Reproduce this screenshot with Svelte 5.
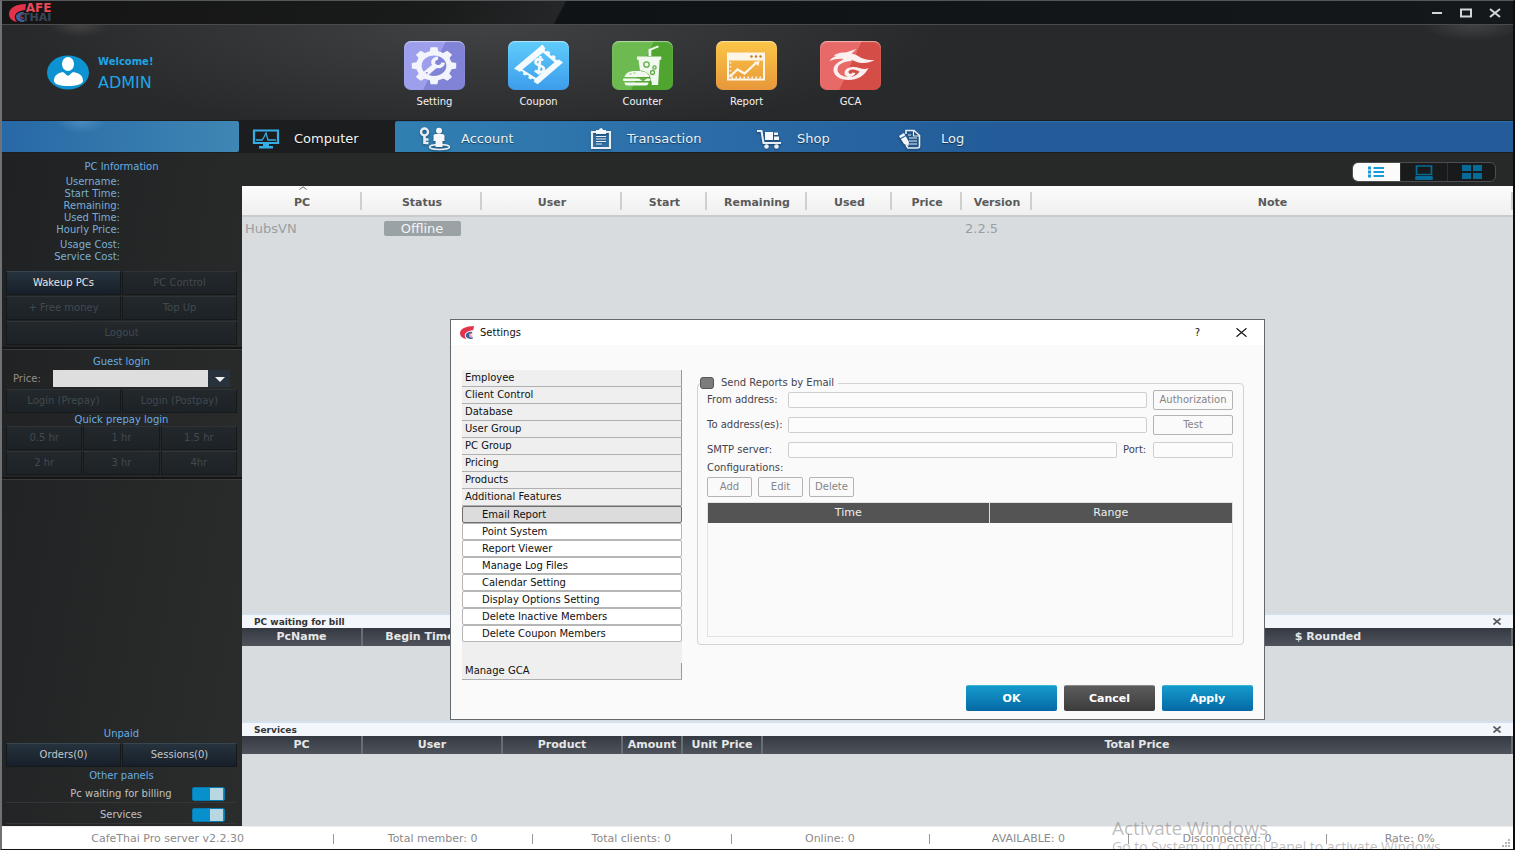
<script lang="ts">
  type App = { id: string; label: string }
  type Tab = { id: string; label: string; width: number; iconWidth: number }
  type Column = { label: string; width?: number }

  const apps: App[] = [
    { id: 'setting', label: 'Setting' },
    { id: 'coupon', label: 'Coupon' },
    { id: 'counter', label: 'Counter' },
    { id: 'report', label: 'Report' },
    { id: 'gca', label: 'GCA' },
  ]

  const tabs: Tab[] = [
    { id: 'account', label: 'Account', width: 166, iconWidth: 32 },
    { id: 'transaction', label: 'Transaction', width: 166, iconWidth: 32 },
    { id: 'shop', label: 'Shop', width: 138, iconWidth: 36 },
    { id: 'log', label: 'Log', width: 120, iconWidth: 42 },
  ]

  const infoTime = ['Username:', 'Start Time:', 'Remaining:', 'Used Time:', 'Hourly Price:']
  const infoCost = ['Usage Cost:', 'Service Cost:']
  const hours = ['0.5 hr', '1 hr', '1.5 hr', '2 hr', '3 hr', '4hr']

  const pcColumns: Column[] = [
    { label: 'PC', width: 120 },
    { label: 'Status', width: 120 },
    { label: 'User', width: 140 },
    { label: 'Start', width: 85 },
    { label: 'Remaining', width: 100 },
    { label: 'Used', width: 85 },
    { label: 'Price', width: 70 },
    { label: 'Version', width: 70 },
    { label: 'Note' },
  ]

  const billColumns: Column[] = [
    { label: 'PcName', width: 120 },
    { label: 'Begin Time', width: 116 },
    { label: '' },
    { label: '$ Rounded', width: 368 },
  ]

  const serviceColumns: Column[] = [
    { label: 'PC', width: 120 },
    { label: 'User', width: 140 },
    { label: 'Product', width: 120 },
    { label: 'Amount', width: 60 },
    { label: 'Unit Price', width: 80 },
    { label: 'Total Price' },
  ]

  const groups = [
    'Employee',
    'Client Control',
    'Database',
    'User Group',
    'PC Group',
    'Pricing',
    'Products',
    'Additional Features',
  ]

  const features = [
    'Email Report',
    'Point System',
    'Report Viewer',
    'Manage Log Files',
    'Calendar Setting',
    'Display Options Setting',
    'Delete Inactive Members',
    'Delete Coupon Members',
  ]

  const status = [
    'CafeThai Pro server v2.2.30',
    'Total member: 0',
    'Total clients: 0',
    'Online: 0',
    'AVAILABLE: 0',
    'Disconnected: 0',
    'Rate: 0%',
  ]

  let view = $state('list')
  let feature = $state('Email Report')
  let showBilling = $state(true)
  let showServices = $state(true)
  let settingsOpen = $state(true)
</script>

{#snippet columns(cols: Column[])}
  <colgroup>
    {#each cols as col}
      <col style={col.width ? `width: ${col.width}px` : undefined} />
    {/each}
  </colgroup>
{/snippet}

{#snippet swoosh()}
  <path d="M17 0C7 0 0 4 0 10c0 4 3 7 8 8-3-3-3-8 1-10 2-1 5-2 7-2z" fill="#e2334a" />
  <path d="M15 8c-5 0-8 2-8 5 0 3 3 5 8 5l1-2c-3 0-5-1-5-3s1-3 3-3z" fill="#3f5f9c" />
  <path d="M15 10c-2 0-3 1-3 2v2h3" fill="none" stroke="#d33a4c" />
{/snippet}

{#snippet appIcon(id: string)}
  <svg viewBox="0 0 60 49" width="61" height="49" aria-hidden="true">
    {#if id === 'setting'}
      <g transform="translate(29.5 24.8) scale(1.2 1)">
        <circle r="12.6" fill="none" stroke="#f4f5fc" stroke-width="4.6" />
        {#each [0, 45, 90, 135, 180, 225, 270, 315] as angle}
          <path d="M-3.8-13.5l1-5h5.6l1 5z" fill="#f4f5fc" transform="rotate({angle})" />
        {/each}
        <path d="M-8 9L2-1" stroke="#f4f5fc" stroke-width="5" />
        <path d="M7.6-3.2A4.2 4.2 0 1 1 3.4-7.6" fill="none" stroke="#f4f5fc" stroke-width="3.2" />
        <circle cx="-6" cy="7" r=".9" fill="#8d90df" />
      </g>
    {:else if id === 'coupon'}
      <path
        d="M34 3.500L5.500 27.500l5.500 3.300 2-.8 2 1.200-.8 2 2.300 1.300 2-.8 2 1.300-.8 2 2.300 1.400 2-.8 2 1.200-.8 2 4 2.400L54.500 21.500l-4-3-2 .8-2-1.500.8-2-2.300-1.700-2 .8-2-1.500.8-2-2.300-1.700-2 .8-1.500-1.200.8-2zM34.500 11.500L46 21.200 27.500 37 14 28.600z"
        fill="#f4fafe"
        fill-rule="evenodd"
      />
      <path d="M34.500 19.500c-2-2.500-7.500-1.800-7.500 1.700 0 4 8.500 2.500 8.500 6.800 0 3.600-6 4.500-9 1.500M32 15l-2 18.500" fill="none" stroke="#f4fafe" stroke-width="2.600" />
    {:else if id === 'counter'}
      <g fill="#f2f8ef">
        <path d="M24.500 15.500h24.300v3.200h-1.600L45.600 44H39c1-2 0-4-1-5 1-5-4-9-10.500-9.500L26 18.700h-1.500z" />
        <path d="M36 15V8.200l9.500-3.700.8 1.800-7.500 3V15z" />
        <path d="M12 36c1-4 5-6 10-6h4c6 0 10 2 11 6z" />
        <rect x="10.500" y="37.500" width="27" height="2.500" rx="1" />
        <path d="M12 41.500h24c0 2-1 3-3 3H15c-2 0-3-1-3-3z" />
      </g>
      <g fill="none" stroke="#5fae45" stroke-width="1.300">
        <circle cx="34" cy="23.500" r="2.700" /><circle cx="42" cy="26.500" r="1.600" /><circle cx="40" cy="31.500" r="2" />
      </g>
      <path d="M27 37.500h7l-3.500 2.500zM17 33h2M21 32h2" fill="#5fae45" stroke="#5fae45" stroke-width=".7" />
    {:else if id === 'report'}
      <g fill="none" stroke="#fdf6e8">
        <rect x="11.500" y="12.500" width="36" height="26" stroke-width="2" />
        <path d="M12 18.800h35" stroke-width="1.500" />
        <path d="M13 36l8-7.500 7 4 12-11" stroke-width="2.300" />
        <path d="M15 36.500h31" stroke-width="2" stroke-dasharray="1.500 2.500" />
        <path d="M14 21v13" stroke-width="1.500" stroke-dasharray="1.500 2.500" />
      </g>
      <path d="M37 21l6-1-1 5z" fill="#fdf6e8" />
      <path d="M12 13h35v5H12z" fill="#fdf6e8" />
      <g fill="#c27a23"><circle cx="35" cy="15.500" r="1.200" /><circle cx="39.500" cy="15.500" r="1.200" /><circle cx="44" cy="15.500" r="1.200" /></g>
    {:else}
      <path
        d="M9 20c2-3 4-4 7-5l-3-.5c4-2.500 8-3 12-3l11-3.500-5 4.500c5 1 7 3 10 4.500 4 1.700 8 2 13 2-4 2-8 3.500-13 3-6-.5-8-3.500-13-3.500-4 0-5 1.500-8 2l3-2.500c-5-.5-9 .3-14 2z"
        fill="#fbf0ef"
      />
      <path
        d="M30 17.500c-9 .5-17 5-17 11.500 0 6 7 10 15 10 9 0 16-4 20-12-3 1.500-6 1-9 0-7-2.500-15-.5-15 5 0 5 9 5.500 11 0l-3-.5c-1 2-4 1.500-4-.5 0-3 5-3.500 11-.5-2 3.500-6 5.500-10 5.500-7 0-12-3-12-7.500C17 23 23 20.500 31 20z"
        fill="#fbf0ef"
      />
    {/if}
  </svg>
{/snippet}

{#snippet tabIcon(id: string)}
  {#if id === 'account'}
    <svg viewBox="0 0 32 24" width="32" height="24" aria-hidden="true">
      <ellipse cx="20.500" cy="20" rx="10" ry="2.500" fill="none" stroke="#e9eef5" stroke-width="1.500" />
      <circle cx="5.500" cy="5" r="3.500" fill="none" stroke="#e9eef5" stroke-width="2.400" />
      <path d="M5.500 8.500V17M6 12.500h3.500M6 16h3.500" stroke="#e9eef5" stroke-width="2.600" />
      <circle cx="20" cy="3.800" r="3" fill="#f4f7fb" />
      <path d="M14.500 9c0-2 2-2 5.500-2s5.500 0 5.500 2v5h-2v6h-7v-6h-2z" fill="#f4f7fb" />
    </svg>
  {:else if id === 'transaction'}
    <svg viewBox="0 0 22 22" width="22" height="22" aria-hidden="true">
      <path d="M2 4h18v16H2z" fill="none" stroke="#e9eef5" stroke-width="2.200" />
      <path d="M6 2h3c0-2.500 4-2.500 4 0h3v4H6z" fill="#f4f7fb" />
      <path d="M6 8.500h10M6 11h10M6 13.500h10M6 16h6" stroke="#e9eef5" stroke-width="1.200" />
    </svg>
  {:else if id === 'shop'}
    <svg viewBox="0 0 25 20" width="25" height="20" aria-hidden="true">
      <path d="M0 2h4.500l2 12H24" fill="none" stroke="#e9eef5" stroke-width="2" />
      <path d="M8 3h8v8H8zM17 3.500h4v2.500h-4zM17 7.500h5v3.500h-5z" fill="#f4f7fb" />
      <circle cx="9.500" cy="17.500" r="2.300" fill="#e9eef5" /><circle cx="19.500" cy="17.500" r="2.300" fill="#e9eef5" />
    </svg>
  {:else}
    <svg viewBox="0 0 24 20" width="24" height="20" aria-hidden="true">
      <path d="M8 5V1.500h8l5.500 5V17a2 2 0 0 1-2 2H10l-2-3" fill="none" stroke="#e9eef5" stroke-width="1.600" />
      <path d="M15.500 2v5h5.500M10 6h3M11 9h8M11 12h8M11 15h8" fill="none" stroke="#e9eef5" stroke-width="1.200" />
      <path d="M1 7l5-3 5 9-.5 4-4.500-2z" fill="#f4f7fb" />
      <path d="M2 10l6-3.500" stroke="#2b65a2" stroke-width="1.200" />
    </svg>
  {/if}
{/snippet}

<div class="window">
  <header class="titlebar">
    <div class="logo">
      <svg viewBox="0 0 17 18" width="17" height="18" aria-hidden="true">{@render swoosh()}</svg>
      <div class="logo-text"><span class="logo-cafe">AFE</span><span class="logo-thai">THAI</span></div>
    </div>
    <div class="window-controls">
      <button type="button" aria-label="Minimize">
        <svg viewBox="0 0 12 10" width="12" height="10"><path d="M1 5h10" stroke="#d4d6d8" stroke-width="2" /></svg>
      </button>
      <button type="button" aria-label="Maximize">
        <svg viewBox="0 0 12 10" width="12" height="10"><path d="M1 1.500h10v7H1z" fill="none" stroke="#d4d6d8" stroke-width="2" /></svg>
      </button>
      <button type="button" aria-label="Close">
        <svg viewBox="0 0 12 10" width="12" height="10"><path d="M1 1l10 8M11 1L1 9" stroke="#d4d6d8" stroke-width="2" /></svg>
      </button>
    </div>
  </header>

  <div class="banner">
    <div class="user">
      <svg viewBox="0 0 42 35" width="42" height="35" aria-hidden="true">
        <ellipse cx="21" cy="17.500" rx="21" ry="17" fill="#0d93d1" />
        <path d="M7 26c0-6 4-8 9-9l5 4 5-4c6 1 10 3 10 9 0 3-7 5-15 5S7 29 7 26z" fill="#fff" />
        <ellipse cx="21" cy="9" rx="6" ry="7" fill="#fff" />
        <path d="M20 16h2l1 4h-4z" fill="#0d93d1" />
      </svg>
      <div class="user-text">
        <div class="welcome">Welcome!</div>
        <div class="user-name">ADMIN</div>
      </div>
    </div>
    <nav class="apps">
      {#each apps as app}
        <button class="app" type="button">
          <span class="app-tile app-tile--{app.id}">{@render appIcon(app.id)}</span>
          {app.label}
        </button>
      {/each}
    </nav>
  </div>

  <nav class="tabs">
    <div class="tabs-side"></div>
    <button class="tab tab--active" type="button">
      <svg viewBox="0 0 28 20" width="28" height="20" aria-hidden="true">
        <path d="M2 1.500h24v12.500H2z" fill="none" stroke="#35aee6" stroke-width="2.200" />
        <path d="M4 11h6l2-3 2-4 2 7h8" fill="none" stroke="#35aee6" stroke-width="1.300" />
        <path d="M11 15h6v2h4v2.500H7V17h4z" fill="#35aee6" />
      </svg>
      Computer
    </button>
    <div class="tabs-rest">
      {#each tabs as tab}
        <button class="tab" type="button" style="width: {tab.width}px">
          <span class="tab-icon" style="width: {tab.iconWidth}px">{@render tabIcon(tab.id)}</span>
          {tab.label}
        </button>
      {/each}
    </div>
  </nav>

  <div class="body">
    <aside class="sidebar">
      <h2>PC Information</h2>
      <div class="info">
        {#each infoTime as label}<div>{label}</div>{/each}
      </div>
      <div class="info">
        {#each infoCost as label}<div>{label}</div>{/each}
      </div>
      <div class="side-grid side-grid--pc">
        <button class="side-btn" type="button">Wakeup PCs</button>
        <button class="side-btn" type="button" disabled>PC Control</button>
        <button class="side-btn" type="button" disabled>+ Free money</button>
        <button class="side-btn" type="button" disabled>Top Up</button>
        <button class="side-btn side-btn--wide" type="button" disabled>Logout</button>
      </div>

      <div class="side-section">
        <h2>Guest login</h2>
        <div class="price">
          <label for="price">Price:</label>
          <div class="price-box">
            <select id="price"><option></option></select>
            <span class="price-arrow"></span>
          </div>
        </div>
        <div class="side-grid">
          <button class="side-btn" type="button" disabled>Login (Prepay)</button>
          <button class="side-btn" type="button" disabled>Login (Postpay)</button>
        </div>
        <h2>Quick prepay login</h2>
        <div class="side-grid side-grid--hours">
          {#each hours as hour}
            <button class="side-btn" type="button" disabled>{hour}</button>
          {/each}
        </div>
      </div>

      <div class="side-bottom">
        <h2>Unpaid</h2>
        <div class="side-grid">
          <button class="side-btn side-btn--soft" type="button">Orders(0)</button>
          <button class="side-btn side-btn--soft" type="button">Sessions(0)</button>
        </div>
        <h2>Other panels</h2>
        <label class="toggle"><span>Pc waiting for billing</span><input type="checkbox" bind:checked={showBilling} /></label>
        <label class="toggle"><span>Services</span><input type="checkbox" bind:checked={showServices} /></label>
      </div>
    </aside>

    <main class="main">
      <div class="toolbar">
        <div class="views">
          <button type="button" aria-label="List view" class:active={view === 'list'} onclick={() => (view = 'list')}>
            <svg viewBox="0 0 18 12" width="18" height="12">
              <path d="M6.500 2H17M6.500 6H17M6.500 10H17" stroke="currentColor" stroke-width="2" />
              <path d="M1 2h3M1 6h3M1 10h3" stroke="currentColor" stroke-width="3" />
            </svg>
          </button>
          <button type="button" aria-label="Screen view" class:active={view === 'screen'} onclick={() => (view = 'screen')}>
            <svg viewBox="0 0 18 15" width="18" height="15">
              <path d="M1.500 1h15v8.500h-15z" fill="none" stroke="currentColor" stroke-width="1.700" />
              <rect x="0" y="11" width="18" height="4" rx="1.500" fill="currentColor" />
            </svg>
          </button>
          <button type="button" aria-label="Grid view" class:active={view === 'grid'} onclick={() => (view = 'grid')}>
            <svg viewBox="0 0 20 14" width="20" height="14">
              <path d="M0 0h9v6H0zM11 0h9v6h-9zM0 8h9v6H0zM11 8h9v6h-9z" fill="currentColor" />
            </svg>
          </button>
        </div>
      </div>

      <div class="pcs">
        <table class="pc-table">
          {@render columns(pcColumns)}
          <thead>
            <tr>
              {#each pcColumns as col, i}
                <th>
                  {col.label}
                  {#if i === 0}
                    <svg class="sort" viewBox="0 0 8 4" width="8" height="4" aria-hidden="true">
                      <path d="M.5 3.500L4 .8l3.500 2.700" fill="none" stroke="#666" />
                    </svg>
                  {/if}
                </th>
              {/each}
            </tr>
          </thead>
          <tbody>
            <tr>
              <td>HubsVN</td>
              <td><span class="badge">Offline</span></td>
              <td></td>
              <td></td>
              <td></td>
              <td></td>
              <td></td>
              <td>2.2.5</td>
              <td></td>
            </tr>
          </tbody>
        </table>
      </div>

      {#if showBilling}
        <section class="panel panel--bill">
          <div class="panel-title">
            <h3>PC waiting for bill</h3>
            <button type="button" aria-label="Close PC waiting for bill" onclick={() => (showBilling = false)}>
              <svg viewBox="0 0 8 7" width="8" height="7"><path d="M.5.5l7 6M7.500.5l-7 6" stroke="#555b66" stroke-width="1.700" /></svg>
            </button>
          </div>
          <table class="panel-table">
            {@render columns(billColumns)}
            <thead><tr>{#each billColumns as col}<th>{col.label}</th>{/each}</tr></thead>
          </table>
        </section>
      {/if}

      {#if showServices}
        <section class="panel">
          <div class="panel-title">
            <h3>Services</h3>
            <button type="button" aria-label="Close services" onclick={() => (showServices = false)}>
              <svg viewBox="0 0 8 7" width="8" height="7"><path d="M.5.5l7 6M7.500.5l-7 6" stroke="#555b66" stroke-width="1.700" /></svg>
            </button>
          </div>
          <table class="panel-table">
            {@render columns(serviceColumns)}
            <thead><tr>{#each serviceColumns as col}<th>{col.label}</th>{/each}</tr></thead>
          </table>
        </section>
      {/if}
    </main>
  </div>

  <footer class="status">
    {#each status as item}<span>{item}</span>{/each}
    <svg class="grip" viewBox="0 0 9 8" width="9" height="8" aria-hidden="true">
      <path d="M7 0h2v2H7zM4 3h2v2H4zM7 3h2v2H7zM1 6h2v2H1zM4 6h2v2H4zM7 6h2v2H7z" fill="#b5b5b5" />
    </svg>
  </footer>

  {#if settingsOpen}
    <div class="dialog" role="dialog" aria-labelledby="dialog-title">
      <div class="dialog-header">
        <svg viewBox="0 0 17 18" width="14" height="13" preserveAspectRatio="none" aria-hidden="true">{@render swoosh()}</svg>
        <h2 id="dialog-title">Settings</h2>
        <button type="button">?</button>
        <button type="button" aria-label="Close" onclick={() => (settingsOpen = false)}>
          <svg viewBox="0 0 11 9" width="11" height="9"><path d="M.5.300l10 8.400M10.500.300l-10 8.400" stroke="#111" stroke-width="1.200" /></svg>
        </button>
      </div>

      <div class="dialog-body">
        <div class="menu">
          {#each groups as group}
            <button class="menu-group" type="button">{group}</button>
          {/each}
          {#each features as item}
            <button class="menu-item" class:selected={feature === item} type="button" onclick={() => (feature = item)}>
              {item}
            </button>
          {/each}
          <div class="menu-gap"></div>
          <button class="menu-group" type="button">Manage GCA</button>
        </div>

        <fieldset class="email">
          <legend>
            <input id="send-reports" type="checkbox" />
            <label for="send-reports">Send Reports by Email</label>
          </legend>
          <div class="form">
            <label for="from">From address:</label>
            <input id="from" class="wide" type="text" disabled />
            <button class="btn" type="button" disabled>Authorization</button>
            <label for="to">To address(es):</label>
            <input id="to" class="wide" type="text" disabled />
            <button class="btn" type="button" disabled>Test</button>
            <label for="smtp">SMTP server:</label>
            <input id="smtp" type="text" disabled />
            <label for="port">Port:</label>
            <input id="port" type="text" disabled />
          </div>
          <div class="config-title">Configurations:</div>
          <div class="config-actions">
            <button class="btn" type="button" disabled>Add</button>
            <button class="btn" type="button" disabled>Edit</button>
            <button class="btn" type="button" disabled>Delete</button>
          </div>
          <div class="config">
            <table>
              <colgroup><col class="col-time" /><col /></colgroup>
              <thead><tr><th>Time</th><th>Range</th></tr></thead>
            </table>
          </div>
        </fieldset>
      </div>

      <div class="dialog-footer">
        <button type="button">OK</button>
        <button class="dark" type="button">Cancel</button>
        <button type="button">Apply</button>
      </div>
    </div>
  {/if}

  <div class="watermark">
    <div class="watermark-title">Activate Windows</div>
    <div>Go to System in Control Panel to activate Windows.</div>
  </div>
</div>

<style>
  :global(body) {
    margin: 0;
  }

  .window,
  .window :global(*) {
    box-sizing: border-box;
  }

  .window {
    position: relative;
    display: flex;
    flex-direction: column;
    min-height: 100vh;
    overflow: hidden;
    border-top: 1px solid #55585a;
    border-right: 2px solid #0b0c0d;
    border-bottom: 1px solid #111;
    border-left: 2px solid #6f7274;
    background: #272829;
    font-family: 'DejaVu Sans', Verdana, sans-serif;
    font-size: 10px;
    line-height: 12px;
  }

  button,
  input,
  select {
    margin: 0;
    padding: 0;
    font: inherit;
  }

  button {
    border: none;
    background: none;
    color: inherit;
  }

  h2,
  h3 {
    margin: 0;
    font-size: inherit;
  }

  svg {
    display: block;
    flex-shrink: 0;
  }

  .titlebar {
    display: flex;
    align-items: center;
    justify-content: space-between;
    height: 23px;
    padding: 0 12px 0 7px;
    background: linear-gradient(118deg, #151515 0, #191a1a 380px, #252627 497px, #101315 499px, #14181a 100%);
  }

  .logo {
    display: flex;
  }

  .logo-text {
    display: flex;
    flex-direction: column;
    align-items: flex-end;
    margin-left: -4px;
    color: #e84a5b;
    font-size: 11px;
    font-weight: bold;
    line-height: 9px;
  }

  .logo-cafe {
    font-size: 12px;
  }

  .logo-thai {
    color: #39475a;
  }

  .window-controls {
    display: flex;
    gap: 17px;
  }

  .banner {
    display: flex;
    height: 96px;
    border-top: 1px solid #4a4b4c;
    background:
      radial-gradient(ellipse 30px 12px at 78px 0, #444, transparent),
      radial-gradient(ellipse 50px 16px at calc(100% - 40px) 0, #404344, transparent),
      radial-gradient(ellipse 460px 110px at 480px 0, #414243, transparent),
      #28292a;
  }

  .user {
    display: flex;
    align-items: center;
    gap: 9px;
    width: 402px;
    padding-left: 45px;
    color: #1ea5e6;
  }

  .user-text {
    padding-top: 4px;
  }

  .welcome {
    font-weight: bold;
  }

  .user-name {
    margin-top: 5px;
    font-size: 16px;
    line-height: 20px;
  }

  .apps {
    display: flex;
    gap: 43px;
    padding-top: 16px;
  }

  .app {
    display: flex;
    flex-direction: column;
    align-items: center;
    gap: 6px;
    width: 61px;
    color: #f2f2f2;
  }

  .app-tile {
    border-radius: 7px;
    box-shadow: inset 0 1px 1px rgba(255, 255, 255, 0.5);
  }

  .app-tile--setting { background: linear-gradient(115deg, #9d9fec 50%, #8083d6 50%); }
  .app-tile--coupon { background: linear-gradient(#5fcdfb, #3d9cec); }
  .app-tile--counter { background: linear-gradient(115deg, #6dba50 50%, #4fa52f 50%); }
  .app-tile--report { background: linear-gradient(#fbc647, #e8973a); }
  .app-tile--gca { background: linear-gradient(115deg, #e86a68 50%, #d44e47 50%); }

  .tabs {
    display: flex;
    height: 33px;
    background: #1c1d1e;
    padding: 1px 0;
  }

  .tabs-side {
    width: 237px;
    border-radius: 0 2px 2px 0;
    background:
      radial-gradient(ellipse 26px 12px at 80px 0, #4a8cbd, transparent),
      linear-gradient(100deg, #2768a6, #3f87b4);
  }

  .tab {
    display: flex;
    align-items: center;
    gap: 10px;
    color: #e8f0f8;
    font-size: 13px;
    line-height: 16px;
    text-shadow: 0 1px 1px rgba(0, 0, 0, 0.5);
  }

  .tab--active {
    gap: 14px;
    width: 156px;
    padding: 4px 0 0 13px;
    color: #f4f4f4;
  }

  .tab-icon {
    display: flex;
    justify-content: center;
    filter: drop-shadow(0 1px 1px rgba(0, 0, 0, 0.4));
  }

  .tabs-rest {
    display: flex;
    flex: 1;
    padding: 3px 0 0 24px;
    border-top: 1px solid #2d6fa9;
    border-radius: 2px 0 0 0;
    background: linear-gradient(90deg, #3180b2, #2c6da8 300px, #235c98 600px);
  }

  .body {
    display: flex;
    flex: 1;
  }

  .sidebar {
    display: flex;
    flex-direction: column;
    width: 240px;
    padding: 8px 5px 2px 4px;
    background: linear-gradient(100deg, #202122, #2b2c2c);
  }

  .sidebar h2 {
    color: #66aee6;
    font-weight: normal;
    text-align: center;
  }

  .info {
    width: 114px;
    margin-top: 3px;
    color: #79afd4;
    text-align: right;
  }

  .side-grid {
    display: grid;
    grid-template-columns: 1fr 1fr;
    gap: 1px;
  }

  .side-grid--pc {
    margin: 8px 0 2px;
  }

  .side-grid--hours {
    grid-template-columns: 1fr 1fr 1fr;
  }

  .side-btn {
    height: 24px;
    border: 1px solid #16191c;
    border-top-color: #384450;
    background: linear-gradient(#26323d, #17202a);
    color: #e8e8e8;
  }

  .side-btn--soft {
    color: #c3c7ca;
  }

  .side-btn--wide {
    grid-column: span 2;
  }

  .side-btn:disabled {
    border-top-color: #2e3337;
    background: linear-gradient(#23282c, #1c2226);
    color: #414a51;
  }

  .side-section {
    margin: 0 -5px 0 -4px;
    padding: 6px 5px 2px 4px;
    border-top: 2px solid #141515;
    border-bottom: 2px solid #141515;
    box-shadow: inset 0 1px #3a3a3a, 0 1px #3a3a3a;
  }

  .side-section h2 {
    padding-top: 1px;
  }

  .price {
    display: flex;
    align-items: center;
    height: 21px;
    padding: 0 7px;
    color: #8f8f8c;
  }

  .price label {
    width: 40px;
  }

  .price-box {
    position: relative;
    flex: 1;
    height: 17px;
  }

  .price-box select {
    display: block;
    width: 100%;
    height: 100%;
    border: none;
    border-radius: 0;
    appearance: none;
    background: linear-gradient(90deg, #dedede calc(100% - 22px), #27323c calc(100% - 22px));
  }

  .price-arrow {
    position: absolute;
    top: 7px;
    right: 5px;
    border: 5px solid transparent;
    border-top-color: #f0f0f0;
    border-bottom: none;
    pointer-events: none;
  }

  .side-bottom {
    display: flex;
    flex-direction: column;
    gap: 3px;
    margin-top: auto;
  }

  .toggle {
    display: flex;
    align-items: center;
    height: 18px;
    padding-right: 12px;
    border-bottom: 1px solid #333536;
    color: #bfc1c2;
  }

  .toggle span {
    flex: 1;
    padding-left: 44px;
    text-align: center;
  }

  .toggle input {
    width: 33px;
    height: 14px;
    border-radius: 2px;
    appearance: none;
    background: #444;
  }

  .toggle input:checked {
    border: 1px solid #0679ae;
    background: linear-gradient(90deg, #0890cd 17px, #b9d7e3 17px, #b9d7e3 30px, #0890cd 30px);
  }

  .main {
    display: flex;
    flex: 1;
    flex-direction: column;
    min-width: 0;
  }

  .toolbar {
    display: flex;
    justify-content: flex-end;
    height: 33px;
    padding: 9px 17px 0 0;
    background: #272828;
  }

  .views {
    display: flex;
    width: 144px;
    height: 20px;
    overflow: hidden;
    border: 1px solid #4c4e4f;
    border-radius: 6px;
    background: #191a1b;
  }

  .views button {
    display: flex;
    flex: 1;
    align-items: center;
    justify-content: center;
    color: #066b97;
  }

  .views button + button {
    border-left: 1px solid #303132;
  }

  .views .active {
    background: #fbfbfb;
    color: #159bd7;
  }

  .pcs {
    flex: 1;
    background: #d8dcdf;
  }

  table {
    width: 100%;
    border-collapse: collapse;
    table-layout: fixed;
  }

  th,
  td {
    padding: 0;
  }

  .pc-table thead {
    background: linear-gradient(#fcfcfc, #efefef);
    box-shadow: 0 2px #c9cccf;
  }

  .pc-table th {
    position: relative;
    height: 29px;
    padding-top: 4px;
    background: linear-gradient(#cfcfcf, #cfcfcf) right 6px / 2px 18px no-repeat;
    color: #5a5a5a;
    font-size: 11px;
  }

  .sort {
    position: absolute;
    top: 0;
    left: calc(50% - 3px);
  }

  .pc-table td {
    height: 27px;
    padding: 0 3px;
    color: #9a9fa2;
    font-size: 13px;
    line-height: 15px;
  }

  .badge {
    display: block;
    width: 77px;
    margin: 0 auto;
    border-radius: 2px;
    background: #9ba2a5;
    color: #f5f5f5;
    text-align: center;
  }

  .panel {
    min-height: 105px;
    background: #d8dcdf;
  }

  .panel--bill {
    min-height: 108px;
  }

  .panel-title {
    display: flex;
    align-items: center;
    justify-content: space-between;
    height: 15px;
    padding: 0 12px;
    border-top: 2px solid #d3e0ee;
    background: #f3f7fb;
    color: #333;
  }

  .panel-title h3 {
    font-size: 9px;
  }

  .panel-table thead {
    background: linear-gradient(#353942, #50535b);
  }

  .panel-table th {
    height: 18px;
    border-right: 2px solid #686c73;
    color: #e6e7e8;
    font-size: 11px;
    white-space: nowrap;
  }

  .status {
    display: grid;
    grid-template-columns: 332fr repeat(5, 199fr) 167fr 20px;
    align-items: center;
    height: 23px;
    padding-top: 2px;
    border-top: 1px solid #eee;
    background: #fff;
    color: #8a8a8a;
    font-size: 11px;
  }

  .status span {
    position: relative;
    text-align: center;
  }

  .status span + span::before {
    position: absolute;
    top: 1px;
    left: 0;
    height: 10px;
    border-left: 1px solid #999;
    content: '';
  }

  .grip {
    align-self: end;
    justify-self: end;
    margin: 0 3px 2px 0;
  }

  .dialog {
    position: absolute;
    top: 318px;
    left: 448px;
    display: flex;
    flex-direction: column;
    width: 815px;
    border: 1px solid #66696c;
    background: #fafafa;
    color: #1c1c24;
  }

  .dialog-header {
    display: flex;
    align-items: center;
    height: 25px;
    padding: 0 17px 0 9px;
    background: #fff;
    color: #111;
  }

  .dialog-header h2 {
    flex: 1;
    padding-left: 6px;
    font-weight: normal;
  }

  .dialog-header button + button {
    margin-left: 36px;
  }

  .dialog-body {
    display: flex;
    align-items: flex-start;
    gap: 15px;
    padding: 25px 20px 0 11px;
  }

  .menu {
    display: flex;
    flex-direction: column;
    width: 220px;
    background: #efefef;
  }

  .menu button {
    height: 17px;
    color: #111;
    text-align: left;
  }

  .menu-group {
    padding-left: 3px;
    border-right: 1px solid #989898;
    border-bottom: 1px solid #b0b0b0;
  }

  .menu .menu-item {
    padding-left: 19px;
    border: 1px solid #b6b6b6;
    border-radius: 2px;
    background: #fff;
  }

  .menu .selected {
    border-color: #6e6e6e;
    background: #dcdcdc;
  }

  .menu-gap {
    height: 21px;
  }

  .email {
    flex: 1;
    min-width: 0;
    margin: 7px 0 0;
    padding: 0 10px 7px 9px;
    border: 1px solid #d2d2d2;
    border-radius: 4px;
    color: #44444c;
  }

  .email legend {
    display: flex;
    align-items: center;
    gap: 7px;
    margin-left: -7px;
    padding: 0 4px 0 0;
  }

  .email legend input {
    width: 14px;
    height: 12px;
    border: 1px solid #555;
    border-radius: 3px;
    appearance: none;
    background: #7c7c7c;
  }

  .form {
    display: grid;
    grid-template-columns: 75px 1fr 24px 80px;
    grid-auto-rows: 20px;
    align-items: center;
    column-gap: 6px;
    row-gap: 5px;
    padding-top: 1px;
  }

  .form label {
    white-space: nowrap;
  }

  .form input {
    width: 100%;
    height: 16px;
    border: 1px solid #cfcfcf;
    border-radius: 2px;
    background: #fcfcfc;
  }

  .form .wide {
    grid-column: span 2;
  }

  .btn {
    height: 20px;
    border: 1px solid #b4b4b4;
    border-radius: 2px;
    color: #85858a;
  }

  .config-title {
    padding: 2px 0 3px;
  }

  .config-actions {
    display: flex;
    gap: 6px;
  }

  .config-actions .btn {
    width: 45px;
  }

  .config {
    height: 135px;
    margin-top: 5px;
    border: 1px solid #e2e2e2;
  }

  .config th {
    height: 20px;
    background: #545454;
    color: #eee;
    font-size: 11px;
    font-weight: normal;
  }

  .config th + th {
    border-left: 1px solid #ddd;
  }

  .col-time {
    width: 281px;
  }

  .dialog-footer {
    display: flex;
    gap: 7px;
    justify-content: flex-end;
    padding: 5px 11px 8px 0;
  }

  .dialog-footer button {
    width: 91px;
    height: 26px;
    border-top: 1px solid #3bb4d4;
    border-radius: 2px;
    background: linear-gradient(#159bcb, #0568a5);
    color: #fff;
    font-size: 11px;
    font-weight: bold;
  }

  .dialog-footer .dark {
    border-top-color: #8a8a8a;
    background: linear-gradient(#5c5c5c, #3b3b3b);
  }

  .watermark {
    position: absolute;
    top: 817px;
    left: 1110px;
    color: rgba(110, 110, 110, 0.45);
    font-family: 'Open Sans', 'Noto Sans', sans-serif;
    font-size: 14px;
    line-height: 18px;
    white-space: nowrap;
    pointer-events: none;
  }

  .watermark-title {
    font-size: 19px;
    line-height: 20px;
  }
</style>
